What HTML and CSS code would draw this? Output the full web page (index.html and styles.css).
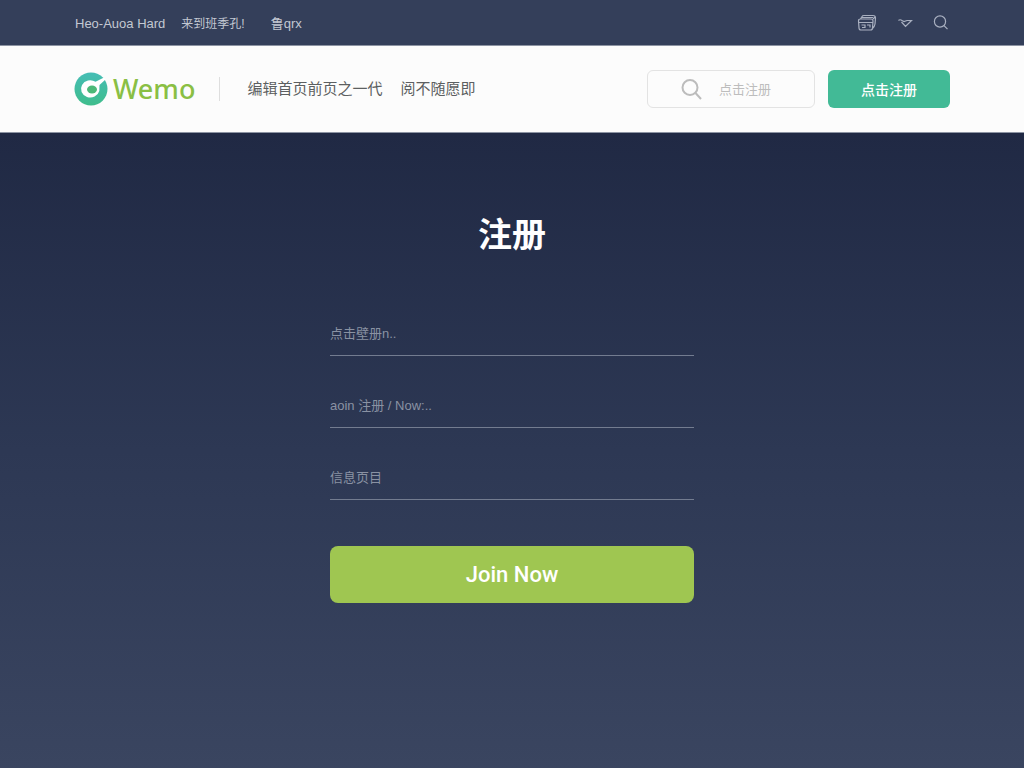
FILE: index.html
```html
<!DOCTYPE html>
<html lang="zh-CN">
<head>
<meta charset="utf-8">
<meta name="viewport" content="width=device-width, initial-scale=1">
<title>Wemo 注册</title>
<link rel="stylesheet" href="styles.css">
</head>
<body>
<div class="topbar">
  <nav class="toplinks" aria-label="Top">
    <a class="lead" href="#">Heo-Auoa Hard</a>
    <a href="#">来到班季孔!</a>
    <a class="last" href="#">鲁qrx</a>
  </nav>
  <div class="tools">
    <button type="button" aria-label="Cards">
      <svg width="20" height="18" viewBox="0 0 20 18"><path d="M3.500 5 5 2.500Q5.500 1.500 7 1.500H16Q18.500 1.500 18.500 4L18 10Q17.500 13 15.500 14.500M5 3.500H16M3.500 5H14Q16 5 16 7L15.500 14Q15.500 16 13.500 16H4Q2 16 2 14L1.500 7Q1.500 5 3.500 5ZM2 8.500H16M4.500 11H8V13.500H5M10 11H13V13.500M16 5 18 3"/></svg>
    </button>
    <button type="button" aria-label="Menu">
      <svg width="16" height="12" viewBox="0 0 16 12"><path d="M1.500 3.500Q3 2 5 3.500L7 4.500 10 3.500H14.500L12.500 5.500 8.500 9.500 4.500 5"/></svg>
    </button>
    <button type="button" aria-label="Search">
      <svg width="16" height="16" viewBox="0 0 16 16"><circle cx="7" cy="6.500" r="5.600"/><path d="M11 10.700 14.500 14.200"/></svg>
    </button>
  </div>
</div>
<header class="header">
  <a class="brand" href="#">
    <svg width="34" height="34" viewBox="0 0 34 34" aria-hidden="true">
      <defs><linearGradient id="ring" x1="0" y1="0" x2="0" y2="1"><stop offset="0" stop-color="#45bdb5"/><stop offset="1" stop-color="#3fbd8c"/></linearGradient></defs>
      <circle cx="17" cy="17" r="16.500" fill="url(#ring)"/>
      <path d="M30 5.500 21.500 9.800A9.300 8.600 0 1 0 25.300 19L25.500 13 31.500 7.500Z" fill="#fff"/>
      <ellipse cx="18" cy="17.500" rx="5" ry="4" fill="#4cb978"/>
    </svg>
    <span>Wemo</span>
  </a>
  <nav class="mainnav" aria-label="Main">
    <a href="#">编辑首页前页之一代</a>
    <a href="#">阅不随愿即</a>
  </nav>
  <div class="actions">
    <label class="search">
      <svg width="22" height="22" viewBox="0 0 22 22" aria-hidden="true"><circle cx="9" cy="9.500" r="7.500"/><path d="M14.500 15 20 21"/></svg>
      <input type="search" placeholder="点击注册" aria-label="搜索">
    </label>
    <button class="signup" type="button">点击注册</button>
  </div>
</header>
<main class="hero">
  <h1>注册</h1>
  <form class="form">
    <input type="text" placeholder="点击壁册n.." aria-label="点击注册">
    <input type="text" placeholder="aoin 注册 / Now:.." aria-label="Join">
    <input type="text" placeholder="信息页目" aria-label="信息">
    <button type="button">Join Now</button>
  </form>
</main>
</body>
</html>
```
FILE: styles.css
```css
* {
  box-sizing: border-box;
}

body {
  margin: 0;
  min-height: 100vh;
  display: flex;
  flex-direction: column;
  font-family: "Liberation Sans", "Noto Sans CJK SC", sans-serif;
  background: #fcfcfc;
}

a {
  color: inherit;
  text-decoration: none;
}

button,
input {
  font: inherit;
}

button {
  border: 0;
  padding: 0;
  cursor: pointer;
}

.topbar {
  display: flex;
  align-items: center;
  justify-content: space-between;
  height: 46px;
  padding: 0 75px;
  background: #343f5a;
  border-bottom: 1px solid #8d94a3;
  color: #c3c8d2;
  font-size: 12px;
}

.toplinks {
  display: flex;
  align-items: baseline;
  gap: 16px;
}

.toplinks .lead {
  font-size: 13px;
}

.toplinks .last {
  margin-left: 10px;
  font-size: 13px;
}

.tools {
  display: flex;
  align-items: center;
  gap: 20px;
}

.tools button {
  display: flex;
  background: none;
}

.tools svg {
  fill: none;
  stroke: #a9b0c0;
  stroke-width: 1.2;
}

.header {
  display: flex;
  align-items: center;
  height: 87px;
  padding: 0 74px;
  background: #fcfcfc;
  border-bottom: 1px solid #8d94a3;
}

.brand {
  display: flex;
  align-items: center;
  gap: 5px;
  padding-right: 24px;
  color: #8abf44;
  font-family: "Noto Sans", sans-serif;
  font-size: 27px;
  font-weight: 500;
  line-height: 34px;
}

.mainnav {
  display: flex;
  gap: 18px;
  padding-left: 27px;
  border-left: 1px solid #dedede;
  color: #5c5f61;
  font-size: 15px;
  line-height: 24px;
}

.actions {
  display: flex;
  gap: 13px;
  margin-left: auto;
}

.search {
  display: flex;
  align-items: center;
  gap: 16px;
  width: 168px;
  height: 38px;
  padding: 0 16px 0 33px;
  border: 1px solid #e3e3e3;
  border-radius: 6px;
}

.search svg {
  flex: none;
  fill: none;
  stroke: #bcbcbc;
  stroke-width: 2;
}

.search input {
  min-width: 0;
  width: 100%;
  padding: 0;
  border: 0;
  outline: 0;
  background: none;
  font-size: 13px;
}

.search input::placeholder {
  color: #bdbdbd;
}

.signup {
  width: 122px;
  height: 38px;
  border-radius: 6px;
  background: #42ba96;
  color: #fff;
  font-size: 14px;
  font-weight: 500;
}

.hero {
  flex: 1;
  display: flex;
  flex-direction: column;
  align-items: center;
  padding: 78px 24px 48px;
  background: linear-gradient(#202944, #2d3854 50%, #3a4560);
}

h1 {
  margin: 0;
  color: #fff;
  font-size: 34px;
  font-weight: 700;
  line-height: 48px;
}

.form {
  display: flex;
  flex-direction: column;
  gap: 28px;
  width: 100%;
  max-width: 364px;
  margin-top: 53px;
}

.form input {
  height: 44px;
  padding: 0;
  border: 0;
  border-bottom: 1px solid #737c90;
  border-radius: 0;
  outline: 0;
  background: none;
  color: #fff;
  font-size: 13px;
}

.form input::placeholder {
  color: #8a92a3;
}

.form button {
  height: 57px;
  margin-top: 18px;
  border-radius: 8px;
  background: #9fc651;
  color: #fff;
  font-family: Roboto, sans-serif;
  font-size: 22px;
  font-weight: 500;
}
```
